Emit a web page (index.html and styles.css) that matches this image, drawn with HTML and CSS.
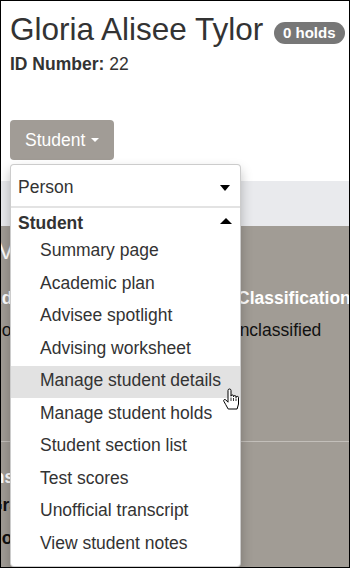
FILE: index.html
```html
<!DOCTYPE html>
<html lang="en">
<head>
    <meta charset="UTF-8">
    <meta name="viewport" content="width=device-width, initial-scale=1.0">
    <title>Student record</title>
    <link rel="stylesheet" href="styles.css">
</head>
<body>
    <div class="frame">
        <header class="who">
            <h1>Gloria Alisee Tylor <span class="badge">0 holds</span></h1>
            <p class="idnum"><b>ID Number:</b> 22</p>
        </header>

        <div class="actions">
            <button class="btn-menu">Student <span class="caret"></span></button>

            <div class="menu">
                <div class="menu-person"><span>Person</span><i class="tri-down"></i></div>
                <div class="menu-head"><span>Student</span><i class="tri-up"></i></div>
                <a class="menu-item">Summary page</a>
                <a class="menu-item">Academic plan</a>
                <a class="menu-item">Advisee spotlight</a>
                <a class="menu-item">Advising worksheet</a>
                <a class="menu-item hover">Manage student details
                    <svg class="hand" viewBox="0 0 17 22" width="17" height="22">
                        <path d="M5 2.5a1.5 1.5 0 0 1 3 0V8.2a1.25 1.25 0 0 1 2.5 0v.6a1.25 1.25 0 0 1 2.5 0v.8a1.25 1.25 0 0 1 2.5 0V16l-1.4 5H5.2l-2.6-4.6L.8 13.2a1.2 1.2 0 0 1 2-1.3L5 14.2Z" fill="#fff" stroke="#000" stroke-width="1" stroke-linejoin="round"/>
                        <path d="M8 9.5v3.5M10.5 10v3M13 10.5v2.5" stroke="#000" stroke-width="0.8"/>
                    </svg>
                </a>
                <a class="menu-item">Manage student holds</a>
                <a class="menu-item">Student section list</a>
                <a class="menu-item">Test scores</a>
                <a class="menu-item">Unofficial transcript</a>
                <a class="menu-item">View student notes</a>
            </div>
        </div>

        <div class="band"></div>

        <section class="panel">
            <h2>Vitals</h2>
            <div class="facts">
                <div>
                    <div class="lbl">Advisor</div>
                    <div class="val">Donna Reyes</div>
                </div>
                <div class="col2">
                    <div class="lbl lbl-class">Classification</div>
                    <div class="val">Unclassified</div>
                </div>
            </div>
            <hr>
            <div class="more">
                <div class="lbl">Institution</div>
                <div class="strong">Graduation</div>
                <div class="strong low">Honors program</div>
            </div>
        </section>
    </div>
</body>
</html>
```

FILE: styles.css
```css
* {
    box-sizing: border-box;
}

body {
    margin: 0;
    font-family: "Liberation Sans", Arial, sans-serif;
    color: #333;
}

.frame {
    position: relative;
    width: 350px;
    height: 568px;
    border: 1px solid #000;
    overflow: hidden;
    background: #fff;
}

.who {
    padding: 11px 9px 0;
}

h1 {
    margin: 0;
    font-size: 31.5px;
    line-height: 34px;
    font-weight: normal;
    white-space: nowrap;
}

.badge {
    display: inline-block;
    vertical-align: middle;
    margin-left: 2px;
    padding: 3.5px 9px;
    font-size: 15px;
    line-height: 15px;
    font-weight: bold;
    color: #fff;
    background-color: #777;
    border-radius: 11px;
    position: relative;
    top: 1px;
}

.idnum {
    margin: 6px 0 0;
    font-size: 17.5px;
    line-height: 24px;
}

.actions {
    position: relative;
    padding: 44px 9px 21px;
}

.btn-menu {
    display: block;
    padding: 7.5px 15px;
    font-family: inherit;
    font-size: 17.5px;
    line-height: 25px;
    color: #fff;
    background-color: #a19c96;
    border: 0;
    border-radius: 4px;
}

.caret {
    display: inline-block;
    vertical-align: middle;
    margin-left: 1px;
    border-left: 4.5px solid transparent;
    border-right: 4.5px solid transparent;
    border-top: 4.5px solid #fff;
    position: relative;
    top: -1px;
}

.menu {
    position: absolute;
    z-index: 5;
    left: 9px;
    top: calc(100% - 17px);
    width: 231px;
    padding-bottom: 5px;
    background-color: #fff;
    border: 1px solid rgba(0, 0, 0, .2);
    border-radius: 4px;
    box-shadow: 0 6px 12px rgba(0, 0, 0, .25);
    font-size: 17.5px;
    line-height: 25px;
}

.menu-person {
    display: flex;
    justify-content: space-between;
    align-items: center;
    padding: 10px 10px 6px 7px;
    border-bottom: 2px solid #e3e3e3;
}

.menu-head {
    display: flex;
    justify-content: space-between;
    align-items: center;
    padding: 2.5px 8px 0 7px;
    font-weight: bold;
}

.tri-down {
    border-left: 5px solid transparent;
    border-right: 5px solid transparent;
    border-top: 6px solid #000;
    margin-top: 1px;
}

.tri-up {
    border-left: 6.5px solid transparent;
    border-right: 6.5px solid transparent;
    border-bottom: 6px solid #000;
    margin-top: -5px;
}

.menu-item {
    position: relative;
    display: block;
    padding: 2.5px 10px 5px 29px;
    color: #333;
    white-space: nowrap;
}

.menu-item.hover {
    background-color: #e2e2e2;
}

.hand {
    position: absolute;
    left: 212px;
    top: 22px;
    z-index: 6;
}

.band {
    height: 45px;
    background-color: #e9eaed;
}

.panel {
    height: 400px;
    padding: 10px 0 0;
    background-color: #a19c95;
    white-space: nowrap;
}

.panel h2 {
    margin: 0 0 0 -3px;
    font-size: 24px;
    line-height: 30px;
    font-weight: normal;
    color: #fff;
}

.facts {
    display: grid;
    grid-template-columns: 238px auto;
    margin: 20px 0 0 -12px;
    font-size: 17.5px;
    line-height: 25px;
}

.lbl {
    font-weight: bold;
    color: #fff;
}

.lbl-class {
    padding-left: 10px;
}

.val {
    margin-top: 7px;
    color: #111;
}

.panel hr {
    margin: 98px 0 0;
    border: 0;
    border-top: 1px solid #c3bfba;
}

.more {
    margin: 23px 0 0 -12px;
    font-size: 17.5px;
    line-height: 25px;
}

.strong {
    margin-top: 3px;
    font-weight: bold;
    color: #111;
}

.strong.low {
    margin-top: 8px;
}
```
